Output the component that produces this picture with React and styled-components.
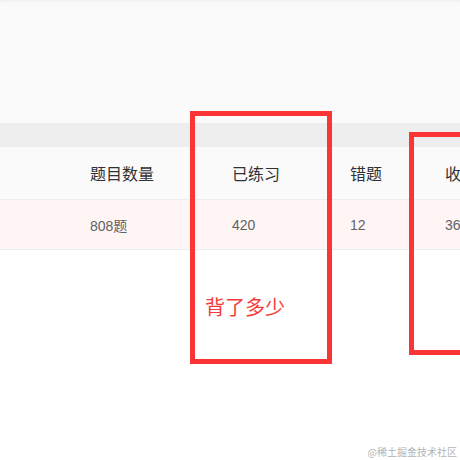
import React from "react";
import styled, { createGlobalStyle } from "styled-components";

const Global = createGlobalStyle`
  html, body { margin: 0; padding: 0; background: #fff; }
  body { font-family: "Liberation Sans", "Noto Sans CJK SC", sans-serif; }
`;

const Page = styled.div`
  position: relative;
  width: 460px;
  height: 460px;
  overflow: hidden;
  background: #fff;
`;

const TopArea = styled.div`
  height: 123px;
  background: #fafafa;
  box-shadow: inset 0 3px 3px -2px rgba(0, 0, 0, 0.06);
`;

const Band = styled.div`
  height: 24px;
  background: #eeeeee;
`;

const Row = styled.div`
  display: grid;
  grid-template-columns: 78px 142px 118px 95px 1fr;
  height: ${(p) => p.$h}px;
  align-items: center;
  background: ${(p) => p.$bg};
  border-bottom: 1px solid #ebeef5;
  box-sizing: border-box;
`;

const Cell = styled.div`
  padding-left: 12px;
  white-space: nowrap;
  font-size: ${(p) => (p.$head ? 16 : 14)}px;
  color: ${(p) => (p.$head ? "#303133" : "#606266")};
`;

const Frame = styled.div`
  position: absolute;
  left: ${(p) => p.$x}px;
  top: ${(p) => p.$y}px;
  width: ${(p) => p.$w}px;
  height: ${(p) => p.$h}px;
  border: 5px solid #fb3535;
  box-sizing: border-box;
  padding: 178px 0 0 10px;
`;

const Note = styled.div`
  font-size: 20px;
  color: #f53a3a;
  font-family: "Noto Sans CJK SC", sans-serif;
  line-height: 26px;
  white-space: nowrap;
`;

const Watermark = styled.div`
  position: absolute;
  right: 3px;
  bottom: 2px;
  font-size: 10px;
  color: #b3b3b3;
  font-family: "Noto Sans CJK SC", sans-serif;
  line-height: 12px;
`;

const headers = ["", "题目数量", "已练习", "错题", "收藏"];
const values = ["", "808题", "420", "12", "36"];

export default function App() {
  return (
    <Page>
      <Global />
      <TopArea />
      <Band />
      <Row $h={53} $bg="#fafafa">
        {headers.map((h, i) => (
          <Cell key={i} $head>{h}</Cell>
        ))}
      </Row>
      <Row $h={50} $bg="#fff5f4">
        {values.map((v, i) => (
          <Cell key={i}>{v}</Cell>
        ))}
      </Row>
      <Frame $x={190} $y={111} $w={142} $h={253}>
        <Note>背了多少</Note>
      </Frame>
      <Frame $x={409} $y={132} $w={80} $h={223} />
      <Watermark>@稀土掘金技术社区</Watermark>
    </Page>
  );
}
